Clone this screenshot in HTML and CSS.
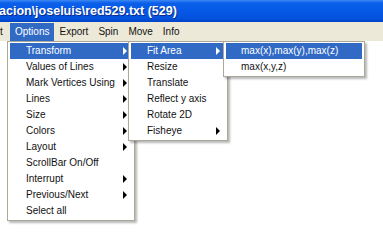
FILE: index.html
```html
<!DOCTYPE html>
<html lang="en">
<head>
    <meta charset="UTF-8">
    <title>red529.txt (529)</title>
    <link rel="stylesheet" href="styles.css">
</head>
<body>
    <div class="window">
        <div class="titlebar">acion\joseluis\red529.txt (529)</div>
        <div class="menubar">
            <span class="cut">t</span>
            <span class="item active">Options</span>
            <span class="item">Export</span>
            <span class="item">Spin</span>
            <span class="item">Move</span>
            <span class="item">Info</span>
        </div>
        <div class="content"></div>

        <!-- Options menu -->
        <div class="menu main">
            <div class="row active">Transform<i class="arrow"></i></div>
            <div class="row">Values of Lines<i class="arrow"></i></div>
            <div class="row">Mark Vertices Using<i class="arrow"></i></div>
            <div class="row">Lines<i class="arrow"></i></div>
            <div class="row">Size<i class="arrow"></i></div>
            <div class="row">Colors<i class="arrow"></i></div>
            <div class="row">Layout<i class="arrow"></i></div>
            <div class="row">ScrollBar On/Off</div>
            <div class="row">Interrupt<i class="arrow"></i></div>
            <div class="row">Previous/Next<i class="arrow"></i></div>
            <div class="row">Select all</div>
        </div>

        <!-- Transform submenu -->
        <div class="menu transform">
            <div class="row active">Fit Area<i class="arrow"></i></div>
            <div class="row">Resize</div>
            <div class="row">Translate</div>
            <div class="row">Reflect y axis</div>
            <div class="row">Rotate 2D</div>
            <div class="row">Fisheye<i class="arrow"></i></div>
        </div>

        <!-- Fit Area submenu -->
        <div class="menu fit">
            <div class="row active">max(x),max(y),max(z)</div>
            <div class="row">max(x,y,z)</div>
        </div>
    </div>
</body>
</html>
```

FILE: styles.css
```css
/* XP style window with open cascading menus */
body {
    margin: 0;
    background: #fff;
    font-family: "Liberation Sans", Arial, sans-serif;
    font-size: 10px;
    color: #111;
}

.window {
    position: relative;
    width: 383px;
    height: 244px;
    overflow: hidden;
    background: #fff;
}

.titlebar {
    height: 23px;
    line-height: 22px;
    text-indent: -1px;
    white-space: nowrap;
    color: #fff;
    font-size: 12.5px;
    font-weight: bold;
    text-shadow: 1px 1px 0 #0a2c8c;
    background: linear-gradient(to bottom, #3d88f4 0, #0b60ea 3px, #0558e6 12px, #0452dc 19px, #0040c4 22px, #ece9d8 22px);
}

.menubar {
    display: flex;
    height: 18px;
    line-height: 17px;
    background: #ece9d8;
    white-space: nowrap;
}

.menubar .cut {
    width: 10px;
}

.menubar .item {
    padding: 0 5px;
}

.menubar .item.active {
    background: #316ac5;
    color: #fff;
}

.menu {
    position: absolute;
    top: 41px;
    background: #fff;
    border: 1px solid #aca899;
    padding: 1px 2px 1px 2px;
    box-shadow: 2px 2px 2px rgba(0, 0, 0, 0.28);
}

.menu.main {
    left: 7px;
    width: 122px;
}

.menu.transform {
    left: 128px;
    width: 94px;
}

.menu.fit {
    left: 223px;
    width: 136px;
}

.row {
    position: relative;
    height: 16px;
    line-height: 16px;
    padding-left: 16px;
    white-space: nowrap;
}

.menu.fit .row {
    padding-left: 15px;
}

.row.active {
    background: #316ac5;
    color: #fff;
}

.arrow {
    position: absolute;
    right: 5px;
    top: 4px;
    width: 0;
    height: 0;
    border-left: 4px solid #000;
    border-top: 4px solid transparent;
    border-bottom: 4px solid transparent;
}

.row.active .arrow {
    border-left-color: #fff;
}
```
